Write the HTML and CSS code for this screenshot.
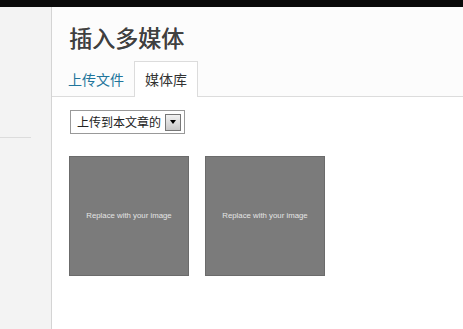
FILE: index.html
```
<!DOCTYPE html>
<html lang="zh">
<head>
<meta charset="utf-8">
<link rel="stylesheet" href="styles.css">
</head>
<body>
<div class="topbar"></div>
<div class="layout">
  <aside class="sidebar"><div class="side-line"></div></aside>
  <main class="main">
    <header class="header">
      <h1 class="title">插入多媒体</h1>
      <nav class="tabs">
        <a class="tab">上传文件</a>
        <span class="tab active">媒体库</span>
      </nav>
    </header>
    <section class="content">
      <div class="select">
        <span class="select-text">上传到本文章的</span>
        <span class="select-btn"><span class="tri"></span></span>
      </div>
      <div class="grid">
        <div class="thumb">Replace with your image</div>
        <div class="thumb">Replace with your image</div>
      </div>
    </section>
  </main>
</div>
</body>
</html>
```
FILE: styles.css
```
html, body { margin: 0; padding: 0; height: 100%; }
body {
  font-family: "Noto Sans CJK SC", "Liberation Sans", sans-serif;
  background: #fff;
  overflow: hidden;
}
.topbar { height: 7px; background: #0a0a0a; }
.layout { display: flex; height: 322px; }
.sidebar {
  width: 51px;
  background: #f3f3f3;
  border-right: 1px solid #d4d4d4;
  padding-top: 130px;
  box-sizing: content-box;
}
.side-line { width: 31px; height: 1px; background: #dcdcdc; }
.main { flex: 1; background: #fff; }
.header {
  background: #fcfcfc;
  border-bottom: 1px solid #dcdcdc;
  height: 90px;
  box-sizing: border-box;
  padding-left: 17px;
  display: flex;
  flex-direction: column;
}
.title {
  margin: 16px 0 0 0;
  font-size: 23px;
  line-height: 28px;
  font-weight: normal;
  color: #404040;
  text-shadow: 0.6px 0 0 #404040;
}
.tabs { display: flex; margin-top: 10px; margin-left: -12px; }
.tab {
  font-size: 14px;
  line-height: 34px;
  padding: 0 10px;
  color: #21759b;
  border: 1px solid transparent;
  border-bottom: none;
}
.tab.active {
  margin-left: -1px;
  color: #333;
  background: #fff;
  border-color: #dcdcdc;
  height: 36px;
  box-sizing: border-box;
}
.content { padding: 11px 0 0 18px; }
.select {
  display: inline-flex;
  align-items: center;
  width: 115px;
  height: 24px;
  box-sizing: border-box;
  border: 1px solid #999;
  background: #fff;
  padding-left: 6px;
}
.select-text { font-size: 12px; color: #222; line-height: 20px; flex: 1; white-space: nowrap; }
.select-btn {
  width: 16px;
  height: 17px;
  margin-right: 3px;
  box-sizing: border-box;
  border: 1px solid #777;
  background: linear-gradient(#f2f2f2, #c8c8c8);
  display: flex;
  align-items: center;
  justify-content: center;
}
.tri {
  width: 0; height: 0;
  border-left: 3.5px solid transparent;
  border-right: 3.5px solid transparent;
  border-top: 4px solid #000;
}
.grid { display: flex; gap: 16px; margin-top: 22px; margin-left: -1px; }
.thumb {
  width: 120px;
  height: 120px;
  box-sizing: border-box;
  background: #7b7b7b;
  border: 1px solid #6b6b6b;
  color: #e4e4e4;
  font-family: "Liberation Sans", Arial, sans-serif;
  font-size: 7.8px;
  display: flex;
  align-items: center;
  justify-content: center;
  padding-bottom: 2px;
}
```
